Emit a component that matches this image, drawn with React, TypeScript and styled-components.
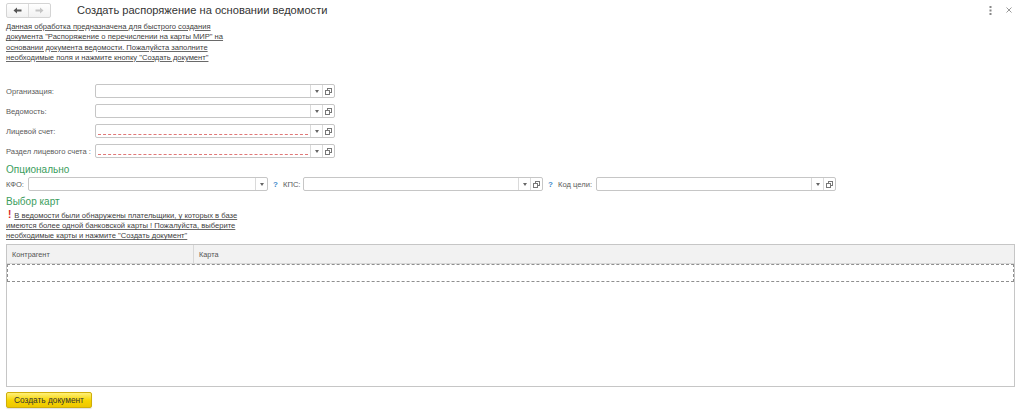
import styled, { createGlobalStyle } from "styled-components";

const GlobalStyle = createGlobalStyle`
  html, body {
    margin: 0;
    padding: 0;
    background: #ffffff;
    font-family: "Liberation Sans", Arial, sans-serif;
    color: #4d4d4d;
  }
`;

const Page = styled.div`
  width: 1023px;
  height: 415px;
  box-sizing: border-box;
  padding: 0 8px 0 6px;
  display: flex;
  flex-direction: column;
  overflow: hidden;
`;

const Header = styled.div`
  height: 18px;
  display: flex;
  align-items: center;
  padding-top: 1px;
`;

const NavGroup = styled.div`
  display: flex;
  border: 1px solid #d4d4d4;
  border-radius: 2px;
  background: linear-gradient(#ffffff, #f1f1f1);
`;

const NavButton = styled.div<{ $disabled?: boolean }>`
  width: 21px;
  height: 13px;
  display: flex;
  align-items: center;
  justify-content: center;
  color: ${(p) => (p.$disabled ? "#c4c4c4" : "#555")};
  & + & {
    border-left: 1px solid #dcdcdc;
  }
`;

const Title = styled.h1`
  margin: 0 0 0 26px;
  font-size: 11.1px;
  font-weight: normal;
  color: #333;
  flex: 1;
`;

const HeaderTools = styled.div`
  display: flex;
  align-items: center;
  gap: 14px;
  padding-right: 3px;
  color: #8a8a8a;
`;

const Description = styled.p`
  margin: 3px 0 0;
  font-size: 7.6px;
  line-height: 10.3px;
  color: #404040;
  text-decoration: underline;
  text-decoration-color: #6a6a6a;
`;

const Form = styled.div`
  display: flex;
  flex-direction: column;
  gap: 6px;
  margin-top: 21px;
`;

const Row = styled.div`
  display: flex;
  align-items: center;
  height: 14px;
`;

const Label = styled.span<{ $width?: number }>`
  width: ${(p) => (p.$width ? `${p.$width}px` : "auto")};
  flex-shrink: 0;
  font-size: 7.6px;
  color: #5a5a5a;
  white-space: nowrap;
`;

const Field = styled.div<{ $width: number }>`
  width: ${(p) => p.$width}px;
  height: 14px;
  box-sizing: border-box;
  display: flex;
  border: 1px solid #c6c6c6;
  border-radius: 2px;
  background: #fff;
`;

const FieldInput = styled.div`
  flex: 1;
  position: relative;
  border-right: 1px solid #dadada;
`;

const Required = styled.span`
  position: absolute;
  left: 2px;
  right: 2px;
  bottom: 2px;
  border-bottom: 1px dashed #e07878;
`;

const FieldButton = styled.div`
  width: 11px;
  display: flex;
  align-items: center;
  justify-content: center;
  color: #777;
  & + & {
    border-left: 1px solid #dadada;
  }
`;

const GroupTitle = styled.div<{ $top: number }>`
  margin-top: ${(p) => p.$top}px;
  font-size: 10px;
  line-height: 12px;
  color: #3a9d5c;
`;

const Help = styled.span`
  width: 5px;
  color: #3f8ccb;
  font-size: 8px;
  font-weight: bold;
  margin: 0 5px;
`;

const Warning = styled.p`
  margin: 2px 0 0;
  font-size: 7.6px;
  line-height: 10px;
  color: #404040;
  text-decoration: underline;
  text-decoration-color: #6a6a6a;
`;

const Bang = styled.span`
  color: #d81e1e;
  font-weight: bold;
  font-size: 10px;
  margin: 0 3px 0 2px;
  display: inline-block;
  text-decoration: none;
`;

const Table = styled.div`
  margin-top: 3px;
  height: 143px;
  box-sizing: border-box;
  border: 1px solid #c6c6c6;
  display: flex;
  flex-direction: column;
`;

const TableHead = styled.div`
  height: 18px;
  display: grid;
  grid-template-columns: 186px 1fr;
  background: #f2f2f2;
  border-bottom: 1px solid #d8d8d8;
`;

const HeadCell = styled.div`
  display: flex;
  align-items: center;
  padding-left: 5px;
  font-size: 7.3px;
  color: #555;
  & + & {
    border-left: 1px solid #d8d8d8;
  }
`;

const SelectedRow = styled.div`
  height: 18px;
  box-sizing: border-box;
  border: 1px dashed #8f8f8f;
`;

const Footer = styled.div`
  display: flex;
  margin-top: 5px;
`;

const PrimaryButton = styled.button`
  width: 86px;
  height: 16px;
  padding: 0;
  border: 1px solid #cfae0a;
  border-radius: 2px;
  background: linear-gradient(#fff07a, #f6d400 55%, #eec700);
  font-family: inherit;
  font-size: 8.3px;
  color: #333;
  box-shadow: 0 1px 1px rgba(0, 0, 0, 0.12);
`;

const Arrow = ({ dir }: { dir: "left" | "right" }) => (
  <svg width="9" height="7" viewBox="0 0 9 7">
    <path
      d={
        dir === "left"
          ? "M0.5 3.5 L4 0.5 L4 2.5 L8.5 2.5 L8.5 4.5 L4 4.5 L4 6.5 Z"
          : "M8.5 3.5 L5 0.5 L5 2.5 L0.5 2.5 L0.5 4.5 L5 4.5 L5 6.5 Z"
      }
      fill="currentColor"
    />
  </svg>
);

const DropIcon = () => (
  <svg width="4" height="3" viewBox="0 0 4 3">
    <path d="M0 0 L4 0 L2 3 Z" fill="#666" />
  </svg>
);

const OpenIcon = () => (
  <svg width="7" height="7" viewBox="0 0 7 7">
    <rect x="2.5" y="0.5" width="4" height="4" fill="none" stroke="#777" strokeWidth="1" />
    <rect x="0.5" y="2.5" width="4" height="4" fill="#fff" stroke="#777" strokeWidth="1" />
  </svg>
);

const Kebab = () => (
  <svg width="3" height="9" viewBox="0 0 3 9">
    <rect x="0.5" y="0" width="2" height="2" fill="#888" />
    <rect x="0.5" y="3.5" width="2" height="2" fill="#888" />
    <rect x="0.5" y="7" width="2" height="2" fill="#888" />
  </svg>
);

const Close = () => (
  <svg width="6" height="6" viewBox="0 0 6 6">
    <path d="M0.5 0.5 L5.5 5.5 M5.5 0.5 L0.5 5.5" stroke="#999" strokeWidth="1" />
  </svg>
);

function Select({ width, required, open = true }: { width: number; required?: boolean; open?: boolean }) {
  return (
    <Field $width={width}>
      <FieldInput>{required && <Required />}</FieldInput>
      <FieldButton>
        <DropIcon />
      </FieldButton>
      {open && (
        <FieldButton>
          <OpenIcon />
        </FieldButton>
      )}
    </Field>
  );
}

const mainFields = [
  { label: "Организация:", required: false },
  { label: "Ведомость:", required: false },
  { label: "Лицевой счет:", required: true },
  { label: "Раздел лицевого счета :", required: true },
];

export default function App() {
  return (
    <>
      <GlobalStyle />
      <Page>
        <Header>
          <NavGroup>
            <NavButton>
              <Arrow dir="left" />
            </NavButton>
            <NavButton $disabled>
              <Arrow dir="right" />
            </NavButton>
          </NavGroup>
          <Title>Создать распоряжение на основании ведомости</Title>
          <HeaderTools>
            <Kebab />
            <Close />
          </HeaderTools>
        </Header>

        <Description>
          Данная обработка предназначена для быстрого создания
          <br />
          документа "Распоряжение о перечислении на карты МИР" на
          <br />
          основании документа ведомости. Пожалуйста заполните
          <br />
          необходимые поля и нажмите кнопку "Создать документ"
        </Description>

        <Form>
          {mainFields.map((f) => (
            <Row key={f.label}>
              <Label $width={89}>{f.label}</Label>
              <Select width={240} required={f.required} />
            </Row>
          ))}
        </Form>

        <GroupTitle $top={6}>Опционально</GroupTitle>
        <Row style={{ marginTop: 1 }}>
          <Label $width={22}>КФО:</Label>
          <Select width={240} open={false} />
          <Help>?</Help>
          <Label $width={20}>КПС:</Label>
          <Select width={240} />
          <Help>?</Help>
          <Label $width={38}>Код цели:</Label>
          <Select width={240} />
        </Row>

        <GroupTitle $top={5}>Выбор карт</GroupTitle>
        <Warning>
          <Bang>!</Bang>В ведомости были обнаружены плательщики, у которых в базе
          <br />
          имеются более одной банковской карты ! Пожалуйста, выберите
          <br />
          необходимые карты и нажмите "Создать документ"
        </Warning>

        <Table>
          <TableHead>
            <HeadCell>Контрагент</HeadCell>
            <HeadCell>Карта</HeadCell>
          </TableHead>
          <SelectedRow />
        </Table>

        <Footer>
          <PrimaryButton>Создать документ</PrimaryButton>
        </Footer>
      </Page>
    </>
  );
}
